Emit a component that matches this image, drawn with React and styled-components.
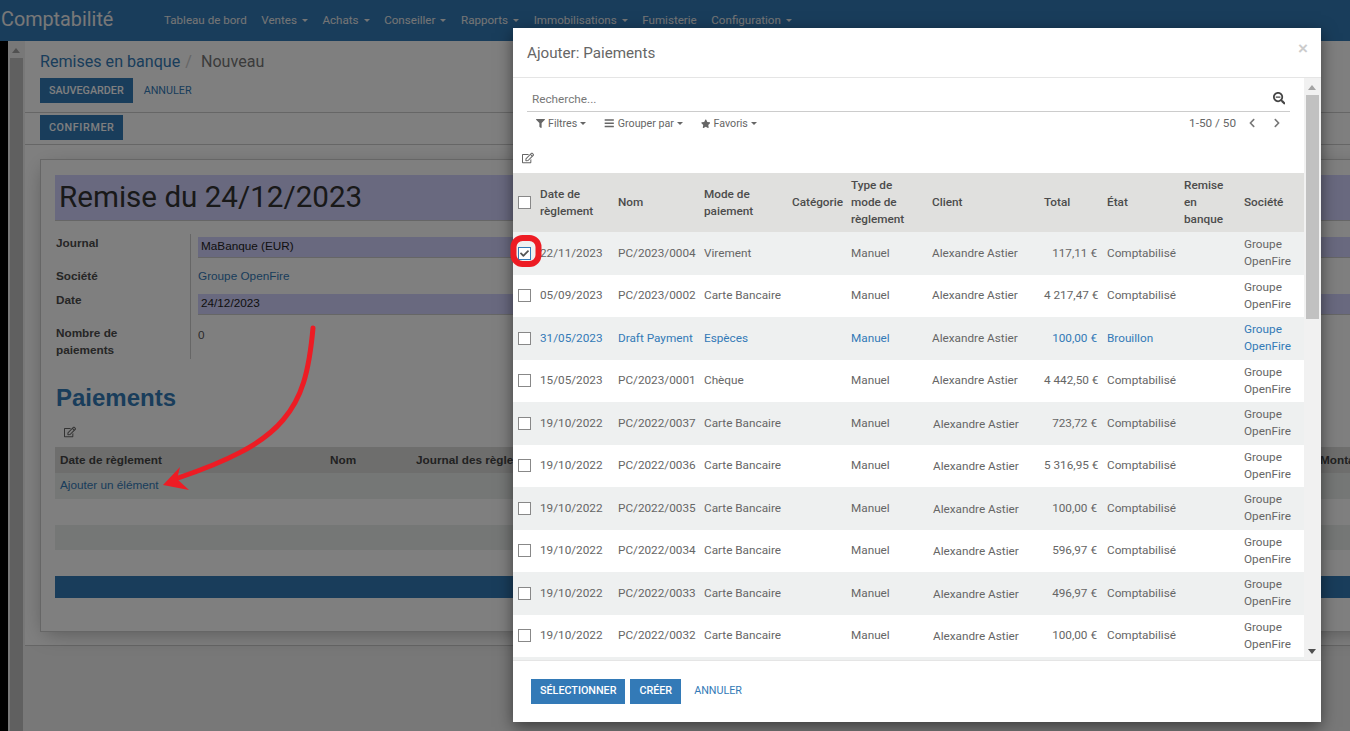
import React from 'react';
import styled, { createGlobalStyle } from 'styled-components';
import { FaFilter, FaBars, FaStar, FaSearchMinus, FaRegEdit, FaChevronLeft, FaChevronRight, FaCheck } from 'react-icons/fa';

const Global = createGlobalStyle`
  html, body { margin: 0; padding: 0; width: 1350px; height: 731px; overflow: hidden; background: #fff; }
  * { box-sizing: border-box; }
`;

const Page = styled.div`
  position: relative; width: 1350px; height: 731px; overflow: hidden;
  display: flex; flex-direction: column;
  font-family: Roboto, "Liberation Sans", sans-serif; font-size: 11.75px; color: #666;
`;
const NavBar = styled.nav`
  height: 41px; flex: none; background: #337ab7; display: flex; align-items: center; padding: 0 0 1px 1px;
`;
const Brand = styled.div`
  font-size: 19.8px; color: #f0f0f0; width: 163px; line-height: 24px;
`;
const NavMenu = styled.div`
  display: flex; gap: 14.6px; color: #eaeaea; font-size: 11.6px; font-weight: 400;
`;
const NavItem = styled.span`
  display: inline-flex; align-items: center; white-space: nowrap;
`;
const Caret = styled.i`
  display: inline-block; width: 0; height: 0; margin-left: ${p => p.$gap}px;
  border-top: 3px solid currentColor; border-left: 3px solid transparent; border-right: 3px solid transparent;
`;
const Shell = styled.div`
  flex: 1; min-height: 0; display: flex; background: #f0f0f0;
`;
const BlackEdge = styled.div`width: 8px; flex: none; background: #000;`;
const Scrollbar = styled.div`
  width: 17px; flex: none; background: #f1f1f1; position: relative;
  display: flex; justify-content: center;
`;
const ArrowUp = styled.i`
  position: absolute; top: ${p => p.$top}px; left: 4px; width: 0; height: 0;
  border-left: 4.5px solid transparent; border-right: 4.5px solid transparent;
  border-bottom: 5px solid #a3a3a3;
`;
const ArrowDown = styled.i`
  position: absolute; bottom: ${p => p.$bottom}px; left: 4px; width: 0; height: 0;
  border-left: 4.5px solid transparent; border-right: 4.5px solid transparent;
  border-top: 5px solid #505050;
`;
const Thumb = styled.div`
  width: 13px; background: #c1c1c1; margin-top: ${p => p.$top}px; height: ${p => p.$h}px;
`;
const Main = styled.main`
  flex: 1; min-width: 0; overflow: hidden; display: flex; flex-direction: column;
`;
const ControlPanel = styled.div`
  background: #fff; padding: 10px 15px 0; height: 72px; border-bottom: 1px solid #ccc; flex: none;
`;
const Breadcrumb = styled.div`
  font-size: 16.1px; line-height: 22px; color: #337ab7; display: flex; gap: 5px;
  & > span:last-child { color: #777; margin-left: 4px; }
  & > em { font-style: normal; color: #ccc; }
`;
const ButtonRow = styled.div`
  display: flex; align-items: center; margin-top: 5px; gap: 11px;
`;
const Button = styled.button`
  height: 25px; padding: 0 9px 1px; border: 0; background: #337ab7; color: #fff; border-radius: 0;
  font-family: Roboto, sans-serif; font-size: 10.75px; font-weight: 500; text-transform: uppercase; white-space: nowrap;
  letter-spacing: ${p => p.$track || 0}px;
`;
const FooterButton = styled(Button)`
  padding-bottom: 3px;
`;
const LinkButton = styled.span`
  color: #337ab7; font-size: 10.75px; text-transform: uppercase; font-weight: 400;
`;
const StatusBar = styled.div`
  background: #fff; height: 32px; padding: 2px 15px 0; border-bottom: 1px solid #ccc; flex: none;
`;
const SheetArea = styled.div`
  background: #fff; height: 501px; flex: none; padding: 14px 15px 0; border-bottom: 1px solid #ccc;
`;
const Sheet = styled.div`
  width: 1500px; height: 473px; background: #fff; border: 1px solid #ccc;
  box-shadow: 0 5px 20px -5px rgba(0,0,0,.35); padding: 15px 14px 0;
`;
const TitleField = styled.div`
  height: 46px; background: #d2d2ff; border-bottom: 1px solid #ccc; padding-left: 4px;
  font-size: 29.6px; line-height: 44px; color: #333;
`;
const FormGrid = styled.div`
  display: grid; grid-template-columns: 136px 1fr; grid-template-rows: 33px 24px 33px 35px; margin-top: 13px;
  font-family: "Liberation Sans", Arial, sans-serif; font-size: 11.75px; line-height: 17px; color: #333;
`;
const Label = styled.div`
  font-weight: 700; color: #4c4c4c; border-right: 1px solid #ccc; padding-left: 1px; padding-right: 40px;
`;
const Value = styled.div`
  padding-left: 7px; padding-top: ${p => p.$pt || 0}px;
  color: ${p => p.$link ? '#337ab7' : '#555'};
`;
const Input = styled.div`
  margin: 3px 0 0 7px; height: 21px; background: #d2d2ff; border-bottom: 1px solid #ccc;
  padding-left: 3px; line-height: 17px; color: #222;
`;
const Heading = styled.h2`
  margin: 25px 0 0 1px; font-family: "Liberation Sans", Arial, sans-serif; font-size: 24px; font-weight: 700;
  line-height: 28px; color: #337ab7;
`;
const EditRow = styled.div`
  height: ${p => p.$h}px; padding: ${p => p.$pt}px 0 0 ${p => p.$pl}px; color: #666; font-size: 12px; line-height: 12px;
  & > svg { display: block; }
`;
const InnerTable = styled.table`
  width: 100%; table-layout: fixed; border-collapse: collapse;
  font-family: "Liberation Sans", Arial, sans-serif; font-size: 11.75px;
  th { background: #dddddb; height: 26px; text-align: left; padding: 0 5px 2px; font-weight: 700; color: #444; white-space: nowrap; overflow: hidden; }
  td { padding: 0 5px 3px; color: #337ab7; }
`;
const InnerRow = styled.tr`
  background: ${p => p.$gray ? '#eaeeec' : '#fff'};
  & > td { height: ${p => p.$h}px; }
`;
const BlueBar = styled.div`
  height: 22px; background: #337ab7; margin-top: 26px;
`;
const Backdrop = styled.div`
  position: absolute; inset: 0; background: rgba(0,0,0,.5);
`;
const Modal = styled.div`
  position: absolute; left: 513px; top: 28px; width: 808px; height: 694px; background: #fff;
  box-shadow: 0 5px 15px rgba(0,0,0,.5); display: flex; flex-direction: column;
`;
const ModalHeader = styled.div`
  height: 50px; flex: none; border-bottom: 1px solid #e5e5e5; padding: 0 14px; display: flex; align-items: center; justify-content: space-between;
  font-size: 15.2px; color: #666;
`;
const Close = styled.span`
  font-family: "Liberation Sans", sans-serif; font-weight: 700; font-size: 17px; color: #ccc; margin-top: -8px; margin-right: -1px;
`;
const ModalBody = styled.div`
  height: 582px; flex: none; display: flex; overflow: hidden;
`;
const ModalContent = styled.div`
  width: 791px; flex: none; overflow: hidden;
`;
const SearchBar = styled.div`
  margin: 10px 14px 0; height: 24px; border-bottom: 1px solid #ccc; display: flex; align-items: center; justify-content: space-between;
  padding: 0 5px 2px; color: #777; line-height: 20px;
  & > svg { color: #444; }
`;
const FilterRow = styled.div`
  margin: 3px 14px 0; height: 17px; display: flex; align-items: center; justify-content: space-between; padding: 0 8px 0 9px;
`;
const Filters = styled.div`display: flex; gap: 18px;`;
const FilterItem = styled.span`
  display: inline-flex; align-items: center; gap: 3px; color: #666; white-space: nowrap; font-size: 10.7px;
`;
const Pager = styled.div`
  display: flex; align-items: center; color: #666; padding-bottom: 1px;
  & > svg { color: #777; }
  & > svg:nth-of-type(1) { margin-left: 11px; }
  & > svg:nth-of-type(2) { margin-left: 15px; }
`;
const PayTable = styled.table`
  width: 791px; table-layout: fixed; border-collapse: collapse; line-height: 17px;
`;
const HeadCell = styled.th`
  background: #e0e0de; height: 59px; padding: 0 5px; text-align: left; font-weight: 500; color: #4c4c4c; vertical-align: middle;
  &:first-child { padding: 0 0 0 5px; }
`;
const BodyRow = styled.tr`
  height: 42.5px; background: ${p => p.$odd ? '#eef0f0' : '#fff'};
  color: ${p => p.$draft ? '#337ab7' : '#666'};
`;
const Cell = styled.td`
  padding: 0 5px; vertical-align: middle; text-align: ${p => p.$right ? 'right' : 'left'}; white-space: ${p => p.$wrap ? 'normal' : 'nowrap'};
  &:first-child { padding: 0 0 0 5px; }
`;
const ClientCell = styled(Cell)`
  color: #666; padding: ${p => p.$nudge ? '2px 4px 0 6px' : '0 5px'};
`;
const Check = styled.span`
  display: flex; align-items: center; justify-content: center; width: 13px; height: 13px; background: #fff;
  border: 1px solid ${p => p.$on ? '#337ab7' : '#888'}; color: #555; font-size: 9px;
`;
const ModalFooter = styled.div`
  flex: 1; border-top: 1px solid #e5e5e5; padding: 18px 18px 0; display: flex; align-items: flex-start; gap: 5px;
`;
const FooterCancel = styled(LinkButton)`
  margin-left: 8px; line-height: 23px;
`;
const Annotation = styled.svg`
  position: absolute; left: 0; top: 0; pointer-events: none;
`;

const menu = [['Tableau de bord', 0], ['Ventes', 1], ['Achats', 1], ['Conseiller', 1], ['Rapports', 1], ['Immobilisations', 1], ['Fumisterie', 0], ['Configuration', 1]];
const rows = [
  ['22/11/2023', 'PC/2023/0004', 'Virement', '117,11 €'],
  ['05/09/2023', 'PC/2023/0002', 'Carte Bancaire', '4 217,47 €'],
  ['31/05/2023', 'Draft Payment', 'Espèces', '100,00 €', 'Brouillon'],
  ['15/05/2023', 'PC/2023/0001', 'Chèque', '4 442,50 €'],
  ['19/10/2022', 'PC/2022/0037', 'Carte Bancaire', '723,72 €'],
  ['19/10/2022', 'PC/2022/0036', 'Carte Bancaire', '5 316,95 €'],
  ['19/10/2022', 'PC/2022/0035', 'Carte Bancaire', '100,00 €'],
  ['19/10/2022', 'PC/2022/0034', 'Carte Bancaire', '596,97 €'],
  ['19/10/2022', 'PC/2022/0033', 'Carte Bancaire', '496,97 €'],
  ['19/10/2022', 'PC/2022/0032', 'Carte Bancaire', '100,00 €'],
  ['19/10/2022', 'PC/2022/0031', 'Carte Bancaire', '100,00 €'],
];
const colWidths = [22, 78, 86, 88, 59, 81, 112, 63, 77, 60, 65];
const heads = ['Date de règlement', 'Nom', 'Mode de paiement', 'Catégorie', 'Type de mode de règlement', 'Client', 'Total', 'État', 'Remise en banque', 'Société'];

export default function App() {
  return (
    <Page>
      <Global />
      <NavBar>
        <Brand>Comptabilité</Brand>
        <NavMenu>
          {menu.map(([t, c]) => <NavItem key={t}>{t}{c ? <Caret $gap={5} /> : null}</NavItem>)}
        </NavMenu>
      </NavBar>
      <Shell>
        <BlackEdge />
        <Scrollbar>
          <ArrowUp $top={7} />
          <Thumb $top={17} $h={690} />
        </Scrollbar>
        <Main>
          <ControlPanel>
            <Breadcrumb><span>Remises en banque</span><em>/</em><span>Nouveau</span></Breadcrumb>
            <ButtonRow><Button>Sauvegarder</Button><LinkButton>Annuler</LinkButton></ButtonRow>
          </ControlPanel>
          <StatusBar><Button $track={0.6}>Confirmer</Button></StatusBar>
          <SheetArea>
            <Sheet>
              <TitleField>Remise du 24/12/2023</TitleField>
              <FormGrid>
                <Label>Journal</Label><Input>MaBanque (EUR)</Input>
                <Label>Société</Label><Value $link>Groupe OpenFire</Value>
                <Label>Date</Label><Input>24/12/2023</Input>
                <Label>Nombre de paiements</Label><Value $pt={2}>0</Value>
              </FormGrid>
              <Heading>Paiements</Heading>
              <EditRow $h={35} $pt={14} $pl={9}><FaRegEdit size={12} /></EditRow>
              <InnerTable>
                <colgroup><col width="270" /><col width="86" /><col width="904" /><col /></colgroup>
                <thead><tr><th>Date de règlement</th><th>Nom</th><th>Journal des règlements</th><th>Montant</th></tr></thead>
                <tbody>
                  <InnerRow $gray $h={26}><td colSpan={4}>Ajouter un élément</td></InnerRow>
                  <InnerRow $h={26}><td colSpan={4} /></InnerRow>
                  <InnerRow $gray $h={25}><td colSpan={4} /></InnerRow>
                </tbody>
              </InnerTable>
              <BlueBar />
            </Sheet>
          </SheetArea>
        </Main>
      </Shell>
      <Backdrop />
      <Modal>
        <ModalHeader>Ajouter: Paiements<Close>×</Close></ModalHeader>
        <ModalBody>
          <ModalContent>
            <SearchBar>Recherche...<FaSearchMinus size={12.5} /></SearchBar>
            <FilterRow>
              <Filters>
                <FilterItem><FaFilter size={9} />Filtres<Caret $gap={0} /></FilterItem>
                <FilterItem><FaBars size={10.5} />Grouper par<Caret $gap={0} /></FilterItem>
                <FilterItem><FaStar size={9.5} />Favoris<Caret $gap={0} /></FilterItem>
              </Filters>
              <Pager>1-50 / 50<FaChevronLeft size={10} /><FaChevronRight size={10} /></Pager>
            </FilterRow>
            <EditRow $h={41} $pt={20} $pl={9}><FaRegEdit size={12} /></EditRow>
            <PayTable>
              <colgroup>{colWidths.map((w, i) => <col key={i} width={w} />)}</colgroup>
              <thead>
                <tr>
                  <HeadCell><Check /></HeadCell>
                  {heads.map(h => <HeadCell key={h}>{h}</HeadCell>)}
                </tr>
              </thead>
              <tbody>
                {rows.map((r, i) => {
                  const draft = r[4] === 'Brouillon';
                  return (
                    <BodyRow key={r[1]} $odd={i % 2 === 0} $draft={draft}>
                      <Cell><Check $on={i === 0}>{i === 0 ? <FaCheck /> : null}</Check></Cell>
                      <Cell>{r[0]}</Cell>
                      <Cell>{r[1]}</Cell>
                      <Cell>{r[2]}</Cell>
                      <Cell />
                      <Cell>Manuel</Cell>
                      <ClientCell $nudge={i >= 4}>Alexandre Astier</ClientCell>
                      <Cell $right>{r[3]}</Cell>
                      <Cell>{r[4] || 'Comptabilisé'}</Cell>
                      <Cell />
                      <Cell $wrap>Groupe OpenFire</Cell>
                    </BodyRow>
                  );
                })}
              </tbody>
            </PayTable>
          </ModalContent>
          <Scrollbar>
            <ArrowUp $top={7} />
            <Thumb $top={17} $h={224} />
            <ArrowDown $bottom={6} />
          </Scrollbar>
        </ModalBody>
        <ModalFooter>
          <FooterButton>Sélectionner</FooterButton>
          <FooterButton>Créer</FooterButton>
          <FooterCancel>Annuler</FooterCancel>
        </ModalFooter>
      </Modal>
      <Annotation width="1350" height="731" viewBox="0 0 1350 731">
        <rect x="513.5" y="238" width="25" height="26" rx="9" fill="none" stroke="#ed1c24" strokeWidth="6" />
        <path d="M313 328 C 309 372, 302 398, 283 420 C 262 445, 225 462, 178 478" fill="none" stroke="#ed1c24" strokeWidth="5" strokeLinecap="round" />
        <polygon points="163,485 180,467 177,479 189,490" fill="#ed1c24" />
      </Annotation>
    </Page>
  );
}
